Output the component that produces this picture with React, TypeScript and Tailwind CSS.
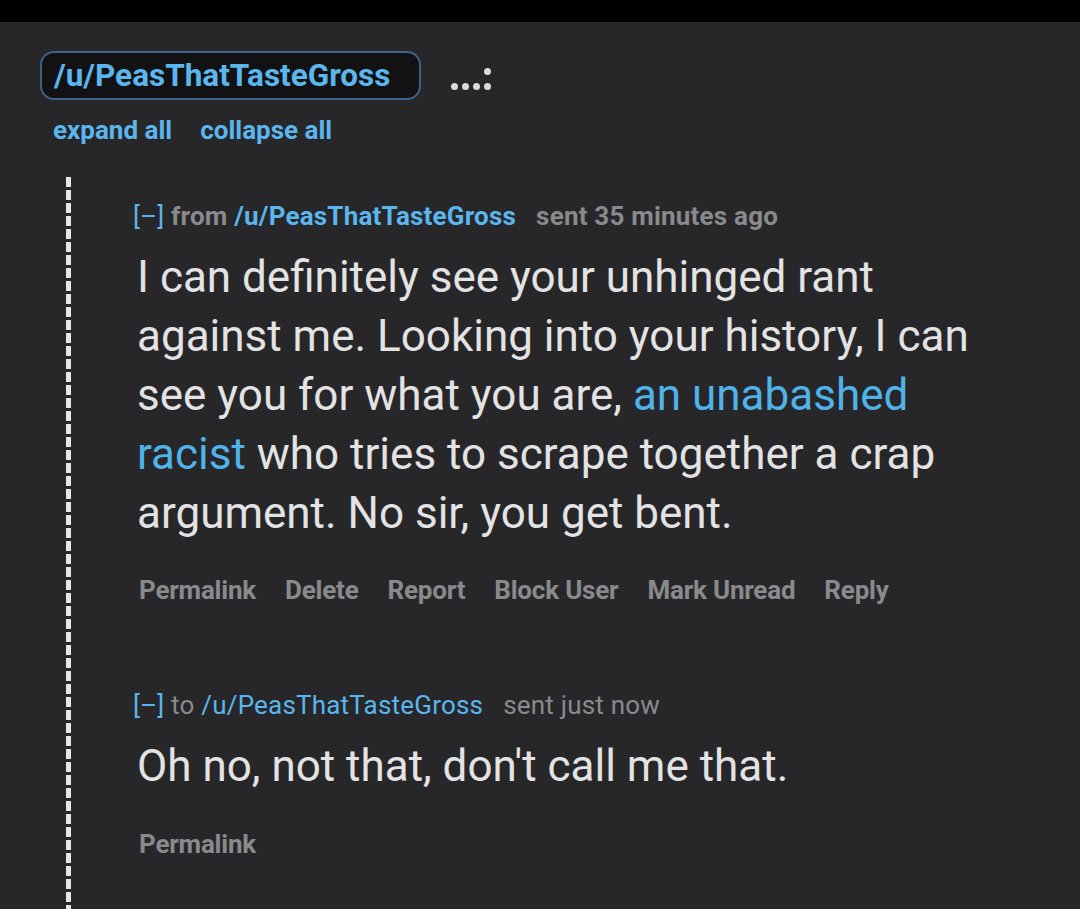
const font = { fontFamily: "Roboto, 'Noto Sans', sans-serif" };

function Actions({ items }: { items: string[] }) {
  return (
    <div className="flex gap-[29px] pl-[6px] text-[26px] font-bold leading-[30px] text-[#8a8a8c] tracking-[-0.2px]">
      {items.map((a) => (
        <span key={a}>{a}</span>
      ))}
    </div>
  );
}

function Dot() {
  return <span className="block h-[7px] w-[7px] rounded-full bg-[#dcdcdc]" />;
}

export default function App() {
  return (
    <div className="min-h-[909px] w-[1080px] bg-[#27272a] overflow-hidden" style={font}>
      <div className="h-[22px] bg-black" />

      <div className="flex items-center pl-[40px] pt-[29px]">
        <div className="flex h-[49px] w-[381px] items-center rounded-[14px] border-2 border-[#3d6187] bg-[#121214] pl-[12px] text-[31.5px] font-bold text-[#5ab6ec]">
          /u/PeasThatTasteGross
        </div>
        <div className="ml-[30px] mt-[6px] flex items-end gap-[4px]">
          <Dot />
          <Dot />
          <Dot />
          <span className="flex flex-col gap-[8px]">
            <Dot />
            <Dot />
          </span>
        </div>
      </div>

      <div className="flex gap-[28px] pl-[53px] pt-[15px] text-[26px] font-bold leading-[30px] text-[#5ab6ec]">
        <span>expand all</span>
        <span>collapse all</span>
      </div>

      <div className="mt-[32px] flex pl-[66px]">
        {/* thread guide */}
        <div className="w-[5px] shrink-0 bg-[repeating-linear-gradient(to_bottom,#e6e6e6_0px,#e6e6e6_10px,transparent_10px,transparent_13px)]" />
        <div className="pl-[62px] pb-[80px]">
          <div className="pt-[24px] text-[26px] leading-[30px] tracking-[0.2px]">
            <span className="text-[#5ab6ec]">[–]</span>{" "}
            <span className="font-bold text-[#8a8a8c]">from</span>{" "}
            <span className="font-bold text-[#5ab6ec]">/u/PeasThatTasteGross</span>
            <span className="ml-[20px] font-bold text-[#8a8a8c]">sent 35 minutes ago</span>
          </div>
          <p className="mt-[17px] pl-[4px] text-[44px] leading-[59px] text-[#e3e3e3]">
            I can definitely see your unhinged rant
            <br />
            against me. Looking into your history, I can
            <br />
            see you for what you are, <span className="text-[#4fb3ea]">an unabashed</span>
            <br />
            <span className="text-[#4fb3ea]">racist</span> who tries to scrape together a crap
            <br />
            argument. No sir, you get bent.
          </p>
          <div className="mt-[32px]">
            <Actions items={["Permalink", "Delete", "Report", "Block User", "Mark Unread", "Reply"]} />
          </div>

          <div className="mt-[85px] text-[26px] leading-[30px] tracking-[0.2px]">
            <span className="text-[#5ab6ec]">[–]</span>{" "}
            <span className="text-[#8a8a8c]">to</span>{" "}
            <span className="text-[#5ab6ec]">/u/PeasThatTasteGross</span>
            <span className="ml-[20px] text-[#8a8a8c]">sent just now</span>
          </div>
          <p className="mt-[26px] pl-[4px] text-[44px] leading-[40px] text-[#e3e3e3]">
            Oh no, not that, don't call me that.
          </p>
          <div className="mt-[43px]">
            <Actions items={["Permalink"]} />
          </div>
        </div>
      </div>
    </div>
  );
}
